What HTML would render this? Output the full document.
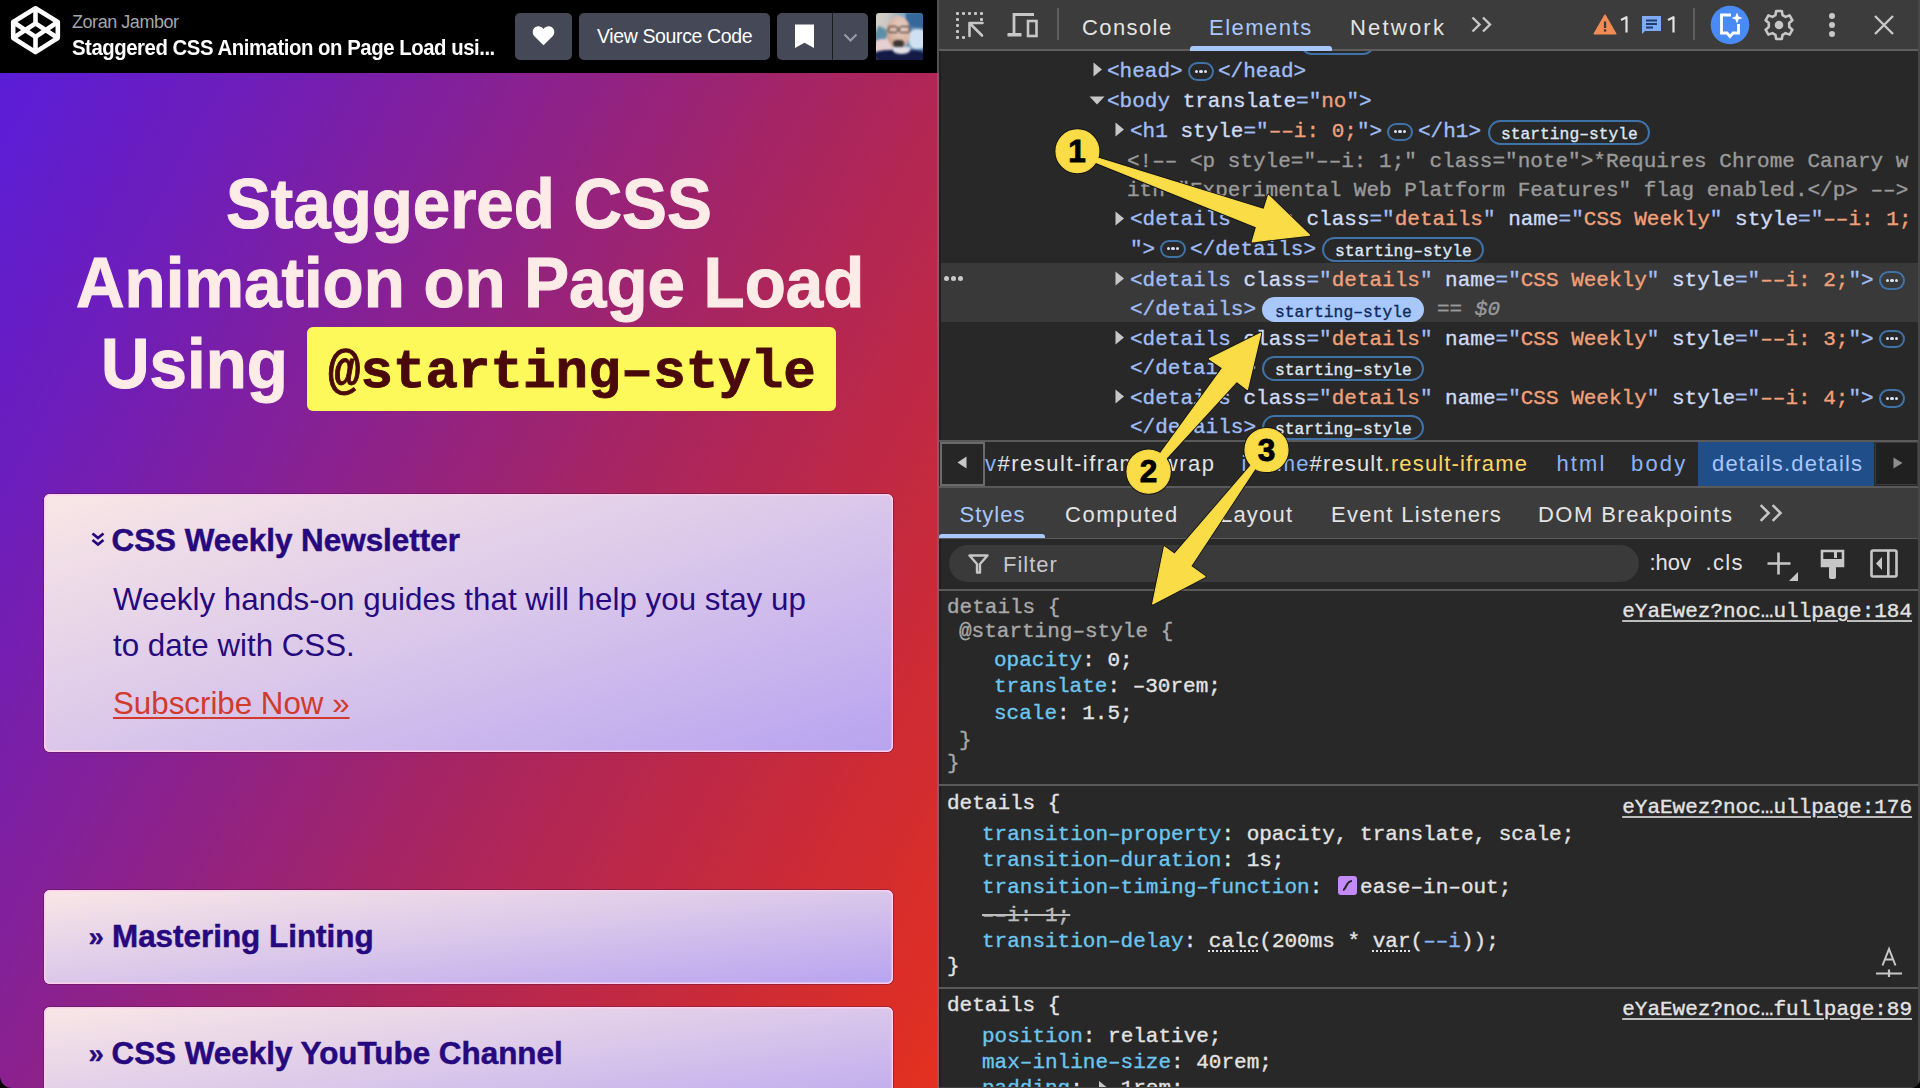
<!DOCTYPE html>
<html><head><meta charset="utf-8"><title>recreation</title>
<style>
html,body{margin:0;padding:0}
body{width:1920px;height:1088px;overflow:hidden;position:relative;background:#000;font-family:"Liberation Sans",sans-serif}
.m{position:absolute;white-space:pre;font-family:"Liberation Mono",monospace;line-height:1;-webkit-text-stroke:0.35px}
.s{position:absolute;white-space:pre;font-family:"Liberation Sans",sans-serif;line-height:1}
.abs{position:absolute}
</style></head><body>

<div class="abs" style="left:0;top:0;width:939px;height:1088px;overflow:hidden;border-bottom-left-radius:12px;background:#000">
<div class="abs" style="left:0;top:0;width:937px;height:73px;background:#000"></div>
<svg class="abs" style="left:0;top:0" width="73" height="73" viewBox="0 0 73 73">
<g fill="none" stroke="#fff" stroke-width="4.6" stroke-linejoin="round">
<polygon points="35.5,8.3 57.8,22 57.8,38 35.5,52.1 13.2,38 13.2,22"/>
<polyline points="13.2,22 35.5,36.8 57.8,22"/>
<polyline points="13.2,38 35.5,23.4 57.8,38"/>
<line x1="35.5" y1="8.3" x2="35.5" y2="23.4"/>
<line x1="35.5" y1="36.8" x2="35.5" y2="52.1"/>
</g></svg>
<div class="s" style="left:72.00px;top:12.51px;font-size:18px;color:#a5a5ab;font-weight:400;letter-spacing:-0.45px">Zoran Jambor</div>
<div class="s" style="left:71.50px;top:36.67px;font-size:22.6px;color:#fff;font-weight:700;letter-spacing:-0.5px;transform:scaleX(0.9);transform-origin:0 0">Staggered CSS Animation on Page Load usi...</div>
<div class="abs" style="left:515px;top:13px;width:57px;height:47px;background:#444857;border-radius:5px"></div>
<svg class="abs" style="left:532px;top:25px" width="23" height="21" viewBox="0 0 23 21"><path d="M11.5 20.2 L2.6 11.6 C-0.2 8.8 0.2 4 3.4 2.1 C6.2 0.4 9.6 1.3 11.5 4 C13.4 1.3 16.8 0.4 19.6 2.1 C22.8 4 23.2 8.8 20.4 11.6 Z" fill="#fff"/></svg>
<div class="abs" style="left:579px;top:13px;width:191px;height:47px;background:#444857;border-radius:5px"></div>
<div class="s" style="left:597.00px;top:26.69px;font-size:19.5px;color:#fff;font-weight:400;letter-spacing:-0.37px">View Source Code</div>
<div class="abs" style="left:777px;top:13px;width:91px;height:47px;background:#444857;border-radius:5px"></div>
<div class="abs" style="left:832px;top:13px;width:1px;height:47px;background:#1b1c22"></div>
<svg class="abs" style="left:795px;top:24px" width="19" height="24" viewBox="0 0 19 24"><path d="M0 0.5 H19 V24 L9.5 18.8 L0 24 Z" fill="#fff"/></svg>
<svg class="abs" style="left:843px;top:33px" width="15" height="10" viewBox="0 0 15 10"><path d="M1.5 1.5 L7.5 7.5 L13.5 1.5" fill="none" stroke="#9a9ba5" stroke-width="2"/></svg>
<div class="abs" style="left:876px;top:13px;width:47px;height:47px;border-radius:3px;overflow:hidden;background:linear-gradient(90deg,#d6cfc6 0%,#c9c8c4 25%,#7fa3c0 62%,#3f6f9c 100%)">
<div style="position:absolute;left:0;top:0;width:47px;height:47px;filter:blur(1.2px)">
<div class="abs" style="left:-4px;top:14px;width:12px;height:26px;background:#5e8fa6;transform:rotate(28deg)"></div>
<div class="abs" style="left:33px;top:16px;width:18px;height:20px;border-radius:40%;background:#cfe0f2"></div>
<div class="abs" style="left:30px;top:0px;width:20px;height:14px;background:#35679a"></div>
<div class="abs" style="left:-2px;top:26px;width:18px;height:16px;border-radius:40%;background:#e6cfd0"></div>
<div class="abs" style="left:11px;top:3px;width:23px;height:31px;border-radius:48% 48% 42% 42%;background:radial-gradient(ellipse at 60% 35%,#e9d0c4 0%,#d8b2a0 60%,#b98870 100%)"></div>
<div class="abs" style="left:11.5px;top:13px;width:10.5px;height:7px;border:1.8px solid #2e2624;border-radius:2px;box-sizing:border-box"></div><div class="abs" style="left:23px;top:13px;width:10.5px;height:7px;border:1.8px solid #2e2624;border-radius:2px;box-sizing:border-box"></div>
<div class="abs" style="left:17px;top:27px;width:11px;height:8px;border-radius:40% 40% 50% 50%;background:#3b3635"></div>
<div class="abs" style="left:-2px;top:37px;width:51px;height:14px;background:#141a48;border-radius:30% 30% 0 0"></div>
<div class="abs" style="left:17px;top:34px;width:17px;height:7px;border-radius:0 0 50% 50%;background:#e2e0e6"></div>
</div>
</div>
<div class="abs" style="left:0;top:73px;width:939px;height:1015px;background:linear-gradient(118deg,#5a1dd8 0%,#721eb4 20%,#a82560 57%,#c82a3a 80%,#e4301f 100%)"></div>
<div class="s" style="left:225.5px;top:167.90px;font-size:71px;font-weight:700;color:#fcebe6;transform:scaleX(0.947);transform-origin:0 0;-webkit-text-stroke:1.1px #fcebe6">Staggered CSS</div>
<div class="s" style="left:75.5px;top:246.90px;font-size:71px;font-weight:700;color:#fcebe6;transform:scaleX(0.947);transform-origin:0 0;-webkit-text-stroke:1.1px #fcebe6">Animation on Page Load</div>
<div class="s" style="left:100.5px;top:327.90px;font-size:71px;font-weight:700;color:#fcebe6;transform:scaleX(0.947);transform-origin:0 0;-webkit-text-stroke:1.1px #fcebe6">Using</div>
<div class="abs" style="left:307px;top:327px;width:529px;height:84px;background:#fdf95a;border-radius:6px"></div>
<div class="m" style="left:328px;top:346.44px;font-size:54.2px;color:#4a0a0c;font-weight:700;-webkit-text-stroke:0.9px #4a0a0c">@starting–style</div>
<div class="abs" style="left:44px;top:494px;width:849px;height:258px;border-radius:6px;background:linear-gradient(to bottom right,#f9e7e6 0%,#dac7ea 50%,#b8a3f0 100%);box-shadow:inset 0 0 0 1.5px rgba(255,208,236,0.95), 0 0 0 1px rgba(80,20,60,0.4)"></div>
<div class="abs" style="left:44px;top:890px;width:849px;height:94px;border-radius:6px;background:linear-gradient(to bottom right,#f9e7e6 0%,#dac7ea 50%,#b8a3f0 100%);box-shadow:inset 0 0 0 1.5px rgba(255,208,236,0.95), 0 0 0 1px rgba(80,20,60,0.4)"></div>
<div class="abs" style="left:44px;top:1007px;width:849px;height:120px;border-radius:6px;background:linear-gradient(to bottom right,#f9e7e6 0%,#dac7ea 50%,#b8a3f0 100%);box-shadow:inset 0 0 0 1.5px rgba(255,208,236,0.95), 0 0 0 1px rgba(80,20,60,0.4)"></div>
<svg class="abs" style="left:91px;top:532px" width="14" height="15" viewBox="0 0 14 15"><path d="M1.5 1.5 L7 6 L12.5 1.5 M1.5 8 L7 12.5 L12.5 8" fill="none" stroke="#26097e" stroke-width="2.8"/></svg>
<div class="s" style="left:111.50px;top:525.12px;font-size:31.4px;color:#26097e;font-weight:700;letter-spacing:0px;-webkit-text-stroke:0.5px #26097e">CSS Weekly Newsletter</div>
<div class="s" style="left:113.00px;top:583.50px;font-size:31.3px;color:#26097e;font-weight:400;letter-spacing:0.02px">Weekly hands-on guides that will help you stay up</div>
<div class="s" style="left:113.00px;top:629.50px;font-size:31.3px;color:#26097e;font-weight:400;">to date with CSS.</div>
<div class="s" style="left:113.00px;top:687.50px;font-size:31.3px;color:#d23a2c;font-weight:400;"><span style="text-decoration:underline;text-decoration-thickness:2px;text-underline-offset:3px">Subscribe Now »</span></div>
<div class="s" style="left:88.50px;top:922.52px;font-size:27.5px;color:#26097e;font-weight:700;-webkit-text-stroke:0.3px #26097e">»</div>
<div class="s" style="left:112.00px;top:921.42px;font-size:31.4px;color:#26097e;font-weight:700;letter-spacing:0px;-webkit-text-stroke:0.5px #26097e">Mastering Linting</div>
<div class="s" style="left:88.50px;top:1039.52px;font-size:27.5px;color:#26097e;font-weight:700;-webkit-text-stroke:0.3px #26097e">»</div>
<div class="s" style="left:111.50px;top:1038.42px;font-size:31.4px;color:#26097e;font-weight:700;letter-spacing:0px;-webkit-text-stroke:0.5px #26097e">CSS Weekly YouTube Channel</div>
</div>
<div class="abs" style="left:939px;top:0;width:981px;height:1088px;background:#282828;overflow:hidden;border-bottom-right-radius:9px">
<div class="abs" style="left:0;top:51px;width:2px;height:1037px;background:#202020"></div>
<div class="abs" style="left:0;top:0;width:981px;height:49px;background:#3c3c3c"></div>
<div class="abs" style="left:0;top:49px;width:981px;height:2px;background:#5e5e5e"></div>
<svg class="abs" style="left:16px;top:11px" width="29" height="28" viewBox="0 0 29 28">
<g fill="#c7c7c7">
<rect x="1" y="1" width="3" height="3" rx="1"/><rect x="7" y="1" width="3" height="3" rx="1"/><rect x="13" y="1" width="3" height="3" rx="1"/><rect x="19" y="1" width="3" height="3" rx="1"/><rect x="25" y="1" width="3" height="3" rx="1"/>
<rect x="1" y="7" width="3" height="3" rx="1"/><rect x="1" y="13" width="3" height="3" rx="1"/><rect x="1" y="19" width="3" height="3" rx="1"/><rect x="1" y="25" width="3" height="3" rx="1"/>
<rect x="7" y="25" width="3" height="3" rx="1"/><rect x="25" y="7" width="3" height="3" rx="1"/>
</g>
<path d="M14.5 12 H27.5 M14.5 12 V25 M15 12.5 L27 24.5" stroke="#c7c7c7" stroke-width="2.6" fill="none" stroke-linecap="round"/>
</svg>
<svg class="abs" style="left:68px;top:12px" width="32" height="26" viewBox="0 0 32 26">
<path d="M7 22.5 V2.5 H27" stroke="#c7c7c7" stroke-width="2.8" fill="none"/>
<rect x="0.5" y="21" width="14" height="3.5" fill="#c7c7c7"/>
<rect x="21" y="9" width="8.5" height="15" fill="none" stroke="#c7c7c7" stroke-width="2.6"/>
</svg>
<div class="abs" style="left:118px;top:8px;width:2px;height:32px;background:#5f5f5f"></div>
<div class="s" style="left:143.00px;top:17.38px;font-size:22px;color:#e3e3e3;font-weight:400;letter-spacing:1.4px">Console</div>
<div class="s" style="left:270.00px;top:17.38px;font-size:22px;color:#a8c7fa;font-weight:400;letter-spacing:1.5px">Elements</div>
<div class="s" style="left:411.00px;top:17.38px;font-size:22px;color:#e3e3e3;font-weight:400;letter-spacing:2.2px">Network</div>
<div class="abs" style="left:251px;top:46px;width:142px;height:5px;background:#a8c7fa;border-radius:3px 3px 0 0"></div>
<svg class="abs" style="left:532px;top:16px" width="22" height="17" viewBox="0 0 22 17"><path d="M1.5 1.5 L8.5 8.5 L1.5 15.5 M12 1.5 L19 8.5 L12 15.5" fill="none" stroke="#c7c7c7" stroke-width="2.4"/></svg>
<svg class="abs" style="left:653.5px;top:13.5px" width="24" height="21" viewBox="0 0 24 21"><path d="M12 1.2 L22.8 19.8 H1.2 Z" fill="#f28b54" stroke="#f28b54" stroke-linejoin="round" stroke-width="1.5"/><rect x="10.9" y="7.5" width="2.3" height="6.5" fill="#3c3c3c"/><rect x="10.9" y="15.3" width="2.3" height="2.3" fill="#3c3c3c"/></svg>
<svg class="abs" style="left:680.5px;top:16px" width="10" height="17" viewBox="0 0 10 17"><path d="M1 4 L6.5 1.2 V16.5" fill="none" stroke="#e3e3e3" stroke-width="2.2" stroke-linejoin="round"/></svg>
<svg class="abs" style="left:702px;top:15px" width="21" height="19" viewBox="0 0 21 19"><path d="M1 1 H20 V16 H4 L1 19 Z" fill="#7cacf8"/><rect x="5" y="4.5" width="11" height="2" fill="#1f3b6a"/><rect x="5" y="8" width="11" height="2" fill="#1f3b6a"/><rect x="5" y="11.5" width="7" height="2" fill="#1f3b6a"/></svg>
<svg class="abs" style="left:727.5px;top:16px" width="10" height="17" viewBox="0 0 10 17"><path d="M1 4 L6.5 1.2 V16.5" fill="none" stroke="#e3e3e3" stroke-width="2.2" stroke-linejoin="round"/></svg>
<div class="abs" style="left:754px;top:8px;width:2px;height:32px;background:#5f5f5f"></div>
<svg class="abs" style="left:771px;top:5px" width="40" height="40" viewBox="0 0 40 40">
<circle cx="20" cy="20" r="19.3" fill="#4a8af4"/>
<path d="M21 10 H11.5 V28 H17 L20 31.5 L23 28 H28.5 V19" fill="none" stroke="#fff" stroke-width="2.8"/>
<path d="M27 7.5 L28.6 11.4 L32.5 13 L28.6 14.6 L27 18.5 L25.4 14.6 L21.5 13 L25.4 11.4 Z" fill="#fff"/>
</svg>
<svg class="abs" style="left:824px;top:9px" width="32" height="32" viewBox="0 0 32 32">
<path d="M13.2 2 H18.8 L19.6 6.2 L22.6 7.9 L26.6 6.4 L29.4 11.3 L26.2 14 V18 L29.4 20.7 L26.6 25.6 L22.6 24.1 L19.6 25.8 L18.8 30 H13.2 L12.4 25.8 L9.4 24.1 L5.4 25.6 L2.6 20.7 L5.8 18 V14 L2.6 11.3 L5.4 6.4 L9.4 7.9 L12.4 6.2 Z" fill="none" stroke="#c7c7c7" stroke-width="2.6" stroke-linejoin="round"/>
<circle cx="16" cy="16" r="4.3" fill="#c7c7c7"/>
</svg>
<div class="abs" style="left:890.3px;top:12.9px;width:6.2px;height:6.2px;border-radius:50%;background:#c7c7c7"></div>
<div class="abs" style="left:890.3px;top:21.7px;width:6.2px;height:6.2px;border-radius:50%;background:#c7c7c7"></div>
<div class="abs" style="left:890.3px;top:30.6px;width:6.2px;height:6.2px;border-radius:50%;background:#c7c7c7"></div>
<svg class="abs" style="left:934px;top:14px" width="22" height="22" viewBox="0 0 22 22"><path d="M2 2 L20 20 M20 2 L2 20" stroke="#c7c7c7" stroke-width="2.4"/></svg>
<div class="abs" style="left:361px;top:51px;width:75px;height:4px;overflow:hidden"><div class="abs" style="left:0;top:-20px;width:75px;height:24px;border:2px solid #3f73a8;border-radius:12px;box-sizing:border-box"></div></div>
<div class="abs" style="left:2px;top:263px;width:979px;height:58.5px;background:#393939"></div>
<div class="abs" style="left:5px;top:276.0px;width:5px;height:5px;border-radius:50%;background:#c9c9c9"></div>
<div class="abs" style="left:12px;top:276.0px;width:5px;height:5px;border-radius:50%;background:#c9c9c9"></div>
<div class="abs" style="left:19px;top:276.0px;width:5px;height:5px;border-radius:50%;background:#c9c9c9"></div>
<svg class="abs" style="left:154px;top:62px" width="10" height="15" viewBox="0 0 10 15"><path d="M0.5 0.5 L9 7.5 L0.5 14.5 Z" fill="#c7c7c7"/></svg>
<div class="m" style="left:168px;top:60.90px;font-size:21px;color:#e3e3e3;"><span style="color:#a0bdf5">&lt;head&gt;</span></div>
<div class="abs" style="left:249px;top:62px;width:26px;height:18.5px;border:2px solid #3f73a8;border-radius:10px;box-sizing:border-box"></div>
<div class="abs" style="left:255.8px;top:69.5px;width:3.4px;height:3.4px;border-radius:50%;background:#d8e2f4"></div>
<div class="abs" style="left:260.40000000000003px;top:69.5px;width:3.4px;height:3.4px;border-radius:50%;background:#d8e2f4"></div>
<div class="abs" style="left:265.0px;top:69.5px;width:3.4px;height:3.4px;border-radius:50%;background:#d8e2f4"></div>
<div class="m" style="left:279px;top:60.90px;font-size:21px;color:#e3e3e3;"><span style="color:#a0bdf5">&lt;/head&gt;</span></div>
<svg class="abs" style="left:150px;top:96px" width="16" height="9" viewBox="0 0 16 9"><path d="M0.5 0.5 H15.5 L8 8.5 Z" fill="#c7c7c7"/></svg>
<div class="m" style="left:168px;top:91.40px;font-size:21px;color:#e3e3e3;"><span style="color:#a0bdf5">&lt;body</span> <span style="color:#cfdbf6">translate</span><span style="color:#a0bdf5">="</span><span style="color:#f1a07a">no</span><span style="color:#a0bdf5">"&gt;</span></div>
<svg class="abs" style="left:176px;top:122px" width="10" height="15" viewBox="0 0 10 15"><path d="M0.5 0.5 L9 7.5 L0.5 14.5 Z" fill="#c7c7c7"/></svg>
<div class="m" style="left:191px;top:121.40px;font-size:21px;color:#e3e3e3;"><span style="color:#a0bdf5">&lt;h1</span> <span style="color:#cfdbf6">style</span><span style="color:#a0bdf5">="</span><span style="color:#f1a07a">––i: 0;</span><span style="color:#a0bdf5">"&gt;</span></div>
<div class="abs" style="left:448px;top:122.5px;width:26px;height:18.5px;border:2px solid #3f73a8;border-radius:10px;box-sizing:border-box"></div>
<div class="abs" style="left:454.8px;top:130.0px;width:3.4px;height:3.4px;border-radius:50%;background:#d8e2f4"></div>
<div class="abs" style="left:459.40000000000003px;top:130.0px;width:3.4px;height:3.4px;border-radius:50%;background:#d8e2f4"></div>
<div class="abs" style="left:464.0px;top:130.0px;width:3.4px;height:3.4px;border-radius:50%;background:#d8e2f4"></div>
<div class="m" style="left:479px;top:121.40px;font-size:21px;color:#e3e3e3;"><span style="color:#a0bdf5">&lt;/h1&gt;</span></div>
<div class="abs" style="left:549px;top:119.5px;width:162px;height:25px;border:2px solid #3f73a8;border-radius:13px;box-sizing:border-box"></div>
<div class="m" style="left:562px;top:126.80px;font-size:16.3px;color:#dfe6f3;">starting–style</div>
<div class="m" style="left:188px;top:150.90px;font-size:21px;color:#e3e3e3;"><span style="color:#9a9a9a">&lt;!–– &lt;p style="––i: 1;" class="note"&gt;*Requires Chrome Canary w</span></div>
<div class="m" style="left:188px;top:179.90px;font-size:21px;color:#e3e3e3;"><span style="color:#9a9a9a">ith "Experimental Web Platform Features" flag enabled.&lt;/p&gt; ––&gt;</span></div>
<svg class="abs" style="left:176px;top:211px" width="10" height="15" viewBox="0 0 10 15"><path d="M0.5 0.5 L9 7.5 L0.5 14.5 Z" fill="#c7c7c7"/></svg>
<div class="m" style="left:191px;top:209.30px;font-size:21px;color:#e3e3e3;"><span style="color:#a0bdf5">&lt;details</span> <span style="color:#cfdbf6">open</span> <span style="color:#cfdbf6">class</span><span style="color:#a0bdf5">="</span><span style="color:#f1a07a">details</span><span style="color:#a0bdf5">"</span> <span style="color:#cfdbf6">name</span><span style="color:#a0bdf5">="</span><span style="color:#f1a07a">CSS Weekly</span><span style="color:#a0bdf5">"</span> <span style="color:#cfdbf6">style</span><span style="color:#a0bdf5">="</span><span style="color:#f1a07a">––i: 1;</span></div>
<div class="m" style="left:191px;top:238.50px;font-size:21px;color:#e3e3e3;"><span style="color:#a0bdf5">"&gt;</span></div>
<div class="abs" style="left:221px;top:239.6px;width:26px;height:18.5px;border:2px solid #3f73a8;border-radius:10px;box-sizing:border-box"></div>
<div class="abs" style="left:227.8px;top:247.1px;width:3.4px;height:3.4px;border-radius:50%;background:#d8e2f4"></div>
<div class="abs" style="left:232.4px;top:247.1px;width:3.4px;height:3.4px;border-radius:50%;background:#d8e2f4"></div>
<div class="abs" style="left:237.0px;top:247.1px;width:3.4px;height:3.4px;border-radius:50%;background:#d8e2f4"></div>
<div class="m" style="left:251px;top:238.50px;font-size:21px;color:#e3e3e3;"><span style="color:#a0bdf5">&lt;/details&gt;</span></div>
<div class="abs" style="left:383px;top:236.6px;width:162px;height:25px;border:2px solid #3f73a8;border-radius:13px;box-sizing:border-box"></div>
<div class="m" style="left:396px;top:243.90px;font-size:16.3px;color:#dfe6f3;">starting–style</div>
<svg class="abs" style="left:176px;top:271px" width="10" height="15" viewBox="0 0 10 15"><path d="M0.5 0.5 L9 7.5 L0.5 14.5 Z" fill="#c7c7c7"/></svg>
<div class="m" style="left:191px;top:270.15px;font-size:21px;color:#e3e3e3;"><span style="color:#a0bdf5">&lt;details</span> <span style="color:#cfdbf6">class</span><span style="color:#a0bdf5">="</span><span style="color:#f1a07a">details</span><span style="color:#a0bdf5">"</span> <span style="color:#cfdbf6">name</span><span style="color:#a0bdf5">="</span><span style="color:#f1a07a">CSS Weekly</span><span style="color:#a0bdf5">"</span> <span style="color:#cfdbf6">style</span><span style="color:#a0bdf5">="</span><span style="color:#f1a07a">––i: 2;</span><span style="color:#a0bdf5">"&gt;</span></div>
<div class="abs" style="left:940px;top:271.25px;width:26px;height:18.5px;border:2px solid #3f73a8;border-radius:10px;box-sizing:border-box"></div>
<div class="abs" style="left:946.8px;top:278.75px;width:3.4px;height:3.4px;border-radius:50%;background:#d8e2f4"></div>
<div class="abs" style="left:951.4px;top:278.75px;width:3.4px;height:3.4px;border-radius:50%;background:#d8e2f4"></div>
<div class="abs" style="left:956.0px;top:278.75px;width:3.4px;height:3.4px;border-radius:50%;background:#d8e2f4"></div>
<div class="m" style="left:191px;top:299.30px;font-size:21px;color:#e3e3e3;"><span style="color:#a0bdf5">&lt;/details&gt;</span></div>
<div class="abs" style="left:323px;top:297.4px;width:162px;height:25px;background:#a8c7fa;border-radius:13px"></div>
<div class="m" style="left:336px;top:304.70px;font-size:16.3px;color:#0d2a5a;">starting–style</div>
<div class="m" style="left:498px;top:299.30px;font-size:21px;color:#e3e3e3;"><span style="color:#9a9a9a">== </span><span style="color:#9a9a9a;font-style:italic">$0</span></div>
<svg class="abs" style="left:176px;top:330px" width="10" height="15" viewBox="0 0 10 15"><path d="M0.5 0.5 L9 7.5 L0.5 14.5 Z" fill="#c7c7c7"/></svg>
<div class="m" style="left:191px;top:328.50px;font-size:21px;color:#e3e3e3;"><span style="color:#a0bdf5">&lt;details</span> <span style="color:#cfdbf6">class</span><span style="color:#a0bdf5">="</span><span style="color:#f1a07a">details</span><span style="color:#a0bdf5">"</span> <span style="color:#cfdbf6">name</span><span style="color:#a0bdf5">="</span><span style="color:#f1a07a">CSS Weekly</span><span style="color:#a0bdf5">"</span> <span style="color:#cfdbf6">style</span><span style="color:#a0bdf5">="</span><span style="color:#f1a07a">––i: 3;</span><span style="color:#a0bdf5">"&gt;</span></div>
<div class="abs" style="left:940px;top:329.6px;width:26px;height:18.5px;border:2px solid #3f73a8;border-radius:10px;box-sizing:border-box"></div>
<div class="abs" style="left:946.8px;top:337.1px;width:3.4px;height:3.4px;border-radius:50%;background:#d8e2f4"></div>
<div class="abs" style="left:951.4px;top:337.1px;width:3.4px;height:3.4px;border-radius:50%;background:#d8e2f4"></div>
<div class="abs" style="left:956.0px;top:337.1px;width:3.4px;height:3.4px;border-radius:50%;background:#d8e2f4"></div>
<div class="m" style="left:191px;top:357.65px;font-size:21px;color:#e3e3e3;"><span style="color:#a0bdf5">&lt;/details&gt;</span></div>
<div class="abs" style="left:323px;top:355.75px;width:162px;height:25px;border:2px solid #3f73a8;border-radius:13px;box-sizing:border-box"></div>
<div class="m" style="left:336px;top:363.05px;font-size:16.3px;color:#dfe6f3;">starting–style</div>
<svg class="abs" style="left:176px;top:389px" width="10" height="15" viewBox="0 0 10 15"><path d="M0.5 0.5 L9 7.5 L0.5 14.5 Z" fill="#c7c7c7"/></svg>
<div class="m" style="left:191px;top:387.90px;font-size:21px;color:#e3e3e3;"><span style="color:#a0bdf5">&lt;details</span> <span style="color:#cfdbf6">class</span><span style="color:#a0bdf5">="</span><span style="color:#f1a07a">details</span><span style="color:#a0bdf5">"</span> <span style="color:#cfdbf6">name</span><span style="color:#a0bdf5">="</span><span style="color:#f1a07a">CSS Weekly</span><span style="color:#a0bdf5">"</span> <span style="color:#cfdbf6">style</span><span style="color:#a0bdf5">="</span><span style="color:#f1a07a">––i: 4;</span><span style="color:#a0bdf5">"&gt;</span></div>
<div class="abs" style="left:940px;top:389px;width:26px;height:18.5px;border:2px solid #3f73a8;border-radius:10px;box-sizing:border-box"></div>
<div class="abs" style="left:946.8px;top:396.5px;width:3.4px;height:3.4px;border-radius:50%;background:#d8e2f4"></div>
<div class="abs" style="left:951.4px;top:396.5px;width:3.4px;height:3.4px;border-radius:50%;background:#d8e2f4"></div>
<div class="abs" style="left:956.0px;top:396.5px;width:3.4px;height:3.4px;border-radius:50%;background:#d8e2f4"></div>
<div class="m" style="left:191px;top:416.90px;font-size:21px;color:#e3e3e3;"><span style="color:#a0bdf5">&lt;/details&gt;</span></div>
<div class="abs" style="left:323px;top:415px;width:162px;height:25px;border:2px solid #3f73a8;border-radius:13px;box-sizing:border-box"></div>
<div class="m" style="left:336px;top:422.30px;font-size:16.3px;color:#dfe6f3;">starting–style</div>
<div class="abs" style="left:0;top:440px;width:981px;height:1.5px;background:#5a5a5a"></div>
<div class="abs" style="left:0;top:441.5px;width:981px;height:44.5px;background:#282828"></div>
<div class="abs" style="left:0.5px;top:442px;width:45.5px;height:44px;border:2px solid #6a6a6a;box-sizing:border-box;background:#262626"></div>
<svg class="abs" style="left:18px;top:456px" width="10" height="13" viewBox="0 0 10 13"><path d="M9.5 0.5 L0.5 6.5 L9.5 12.5 Z" fill="#c7c7c7"/></svg>
<div class="s" style="left:46.00px;top:452.78px;font-size:22px;color:#e3e3e3;font-weight:400;letter-spacing:1.5px"><span style="color:#8ab4f8">v</span><span style="color:#e3e3e3">#result-iframe-wrap</span></div>
<div class="s" style="left:302.50px;top:452.78px;font-size:22px;color:#e3e3e3;font-weight:400;letter-spacing:1.15px"><span style="color:#8ab4f8">iframe</span><span style="color:#e3e3e3">#result</span><span style="color:#fdd663">.result-iframe</span></div>
<div class="s" style="left:617.50px;top:452.78px;font-size:22px;color:#8ab4f8;font-weight:400;letter-spacing:2.1px"><span style="color:#8ab4f8">html</span></div>
<div class="s" style="left:692.00px;top:452.78px;font-size:22px;color:#8ab4f8;font-weight:400;letter-spacing:2.2px"><span style="color:#8ab4f8">body</span></div>
<div class="abs" style="left:759px;top:442px;width:176px;height:44px;background:#1f4e89"></div>
<div class="s" style="left:773.00px;top:452.78px;font-size:22px;color:#a8c7fa;font-weight:400;letter-spacing:1.2px">details.details</div>
<div class="abs" style="left:936px;top:442px;width:43px;height:43px;background:#202020;border:1px solid #3a3a3a;box-sizing:border-box"></div>
<svg class="abs" style="left:954px;top:457px" width="10" height="12" viewBox="0 0 10 12"><path d="M0.5 0.5 L9.5 6 L0.5 11.5 Z" fill="#8e8e8e"/></svg>
<div class="abs" style="left:0;top:486px;width:981px;height:1.5px;background:#5a5a5a"></div>
<div class="abs" style="left:0;top:487.5px;width:981px;height:50px;background:#3c3c3c"></div>
<div class="s" style="left:20.50px;top:503.58px;font-size:22px;color:#a8c7fa;font-weight:400;letter-spacing:1px">Styles</div>
<div class="s" style="left:126.00px;top:503.58px;font-size:22px;color:#e3e3e3;font-weight:400;letter-spacing:1.55px">Computed</div>
<div class="s" style="left:281.00px;top:503.58px;font-size:22px;color:#e3e3e3;font-weight:400;letter-spacing:1.2px">Layout</div>
<div class="s" style="left:392.00px;top:503.58px;font-size:22px;color:#e3e3e3;font-weight:400;letter-spacing:1.3px">Event Listeners</div>
<div class="s" style="left:599.00px;top:503.58px;font-size:22px;color:#e3e3e3;font-weight:400;letter-spacing:1.45px">DOM Breakpoints</div>
<svg class="abs" style="left:820px;top:503px" width="25" height="20" viewBox="0 0 22 17"><path d="M1.5 1.5 L8.5 8.5 L1.5 15.5 M12 1.5 L19 8.5 L12 15.5" fill="none" stroke="#c7c7c7" stroke-width="2.2"/></svg>
<div class="abs" style="left:0px;top:534px;width:106px;height:4.5px;background:#a8c7fa;border-radius:3px 3px 0 0"></div>
<div class="abs" style="left:0;top:537.5px;width:981px;height:1.5px;background:#5a5a5a"></div>
<div class="abs" style="left:10px;top:545px;width:690px;height:37px;background:#3a3a3a;border-radius:19px"></div>
<svg class="abs" style="left:29px;top:554px" width="21" height="20" viewBox="0 0 21 20"><path d="M1.5 1.5 H19.5 L12 10 V18.5 H9 V10 Z" fill="none" stroke="#c7c7c7" stroke-width="2.4" stroke-linejoin="round"/></svg>
<div class="s" style="left:64.00px;top:554.38px;font-size:22px;color:#c7c7c7;font-weight:400;letter-spacing:1px">Filter</div>
<div class="s" style="left:710.50px;top:552.18px;font-size:22px;color:#e3e3e3;font-weight:400;letter-spacing:0px">:hov</div>
<div class="s" style="left:766.50px;top:552.18px;font-size:22px;color:#e3e3e3;font-weight:400;letter-spacing:1.3px">.cls</div>
<svg class="abs" style="left:827px;top:551px" width="34" height="31" viewBox="0 0 34 31"><path d="M12.5 1.5 V23.5 M1.5 12.5 H24.5" stroke="#c7c7c7" stroke-width="2.6"/><path d="M32 21 V30 H23 Z" fill="#c7c7c7"/></svg>
<svg class="abs" style="left:881px;top:549px" width="26" height="31" viewBox="0 0 26 31">
<path d="M2 2 H23 V17 H2 Z" fill="none" stroke="#c7c7c7" stroke-width="2.6"/>
<rect x="2" y="10" width="21" height="7" fill="#c7c7c7"/>
<rect x="14" y="2" width="3" height="7" fill="#c7c7c7"/>
<rect x="9" y="17" width="7" height="13" rx="2" fill="#c7c7c7"/>
</svg>
<svg class="abs" style="left:931px;top:549px" width="28" height="29" viewBox="0 0 28 29">
<rect x="1.5" y="1.5" width="25" height="26" rx="1.5" fill="none" stroke="#c7c7c7" stroke-width="2.6"/>
<rect x="17" y="1.5" width="2.6" height="26" fill="#c7c7c7"/>
<path d="M12 8 L6 14.5 L12 21 Z" fill="#c7c7c7"/>
</svg>
<div class="abs" style="left:0;top:589px;width:981px;height:1.5px;background:#5a5a5a"></div>
<div class="m" style="left:8px;top:596.70px;font-size:21px;color:#a9a9a9;">details {</div>
<div class="m" style="left:683.2px;top:601.40px;font-size:21px;color:#e3e3e3;"><span style="text-decoration:underline;text-underline-offset:3px;text-decoration-color:#bdbdbd">eYaEwez?noc…ullpage:184</span></div>
<div class="m" style="left:20px;top:620.90px;font-size:21px;color:#a9a9a9;">@starting–style {</div>
<div class="m" style="left:55px;top:649.60px;font-size:21px;color:#e3e3e3;"><span style="color:#6cc6ee">opacity</span>: 0;</div>
<div class="m" style="left:55px;top:676.10px;font-size:21px;color:#e3e3e3;"><span style="color:#6cc6ee">translate</span>: –30rem;</div>
<div class="m" style="left:55px;top:702.60px;font-size:21px;color:#e3e3e3;"><span style="color:#6cc6ee">scale</span>: 1.5;</div>
<div class="m" style="left:20px;top:729.90px;font-size:21px;color:#a9a9a9;">}</div>
<div class="m" style="left:8px;top:753.30px;font-size:21px;color:#a9a9a9;">}</div>
<div class="abs" style="left:0;top:784px;width:981px;height:1.5px;background:#5a5a5a"></div>
<div class="m" style="left:8px;top:793.40px;font-size:21px;color:#e3e3e3;">details {</div>
<div class="m" style="left:683.2px;top:797.40px;font-size:21px;color:#e3e3e3;"><span style="text-decoration:underline;text-underline-offset:3px;text-decoration-color:#bdbdbd">eYaEwez?noc…ullpage:176</span></div>
<div class="m" style="left:43px;top:824.10px;font-size:21px;color:#e3e3e3;"><span style="color:#6cc6ee">transition–property</span>: opacity, translate, scale;</div>
<div class="m" style="left:43px;top:850.40px;font-size:21px;color:#e3e3e3;"><span style="color:#6cc6ee">transition–duration</span>: 1s;</div>
<div class="m" style="left:43px;top:876.70px;font-size:21px;color:#e3e3e3;"><span style="color:#6cc6ee">transition–timing–function</span>:   ease–in–out;</div>
<svg class="abs" style="left:399px;top:876px" width="19" height="19" viewBox="0 0 19 19"><rect x="0" y="0" width="19" height="19" rx="3" fill="#c58af9"/><path d="M5 14 C8 14 8 5 14 5" stroke="#282828" stroke-width="2.2" fill="none"/></svg>
<div class="m" style="left:43px;top:904.50px;font-size:21px;color:#bdbdbd;"><span style="text-decoration:line-through;text-decoration-thickness:2px">––i: 1;</span></div>
<div class="m" style="left:43px;top:930.80px;font-size:21px;color:#e3e3e3;"><span style="color:#6cc6ee">transition–delay</span>: <span style="text-decoration:underline dotted;text-underline-offset:4px">calc</span>(200ms * <span style="text-decoration:underline dotted;text-underline-offset:4px">var</span>(<span style="color:#8ab4f8">––i</span>));</div>
<div class="m" style="left:8px;top:955.70px;font-size:21px;color:#e3e3e3;">}</div>
<svg class="abs" style="left:936px;top:946px" width="28" height="32" viewBox="0 0 28 32"><path d="M7.5 19.5 L14 3 L20.5 19.5 M10 13.5 H18" stroke="#c7c7c7" stroke-width="2" fill="none"/><path d="M1 27.5 H27 M14 23.5 V31" stroke="#c7c7c7" stroke-width="2.2"/></svg>
<div class="abs" style="left:0;top:987px;width:981px;height:1.5px;background:#5a5a5a"></div>
<div class="m" style="left:8px;top:995.10px;font-size:21px;color:#e3e3e3;">details {</div>
<div class="m" style="left:683.2px;top:998.90px;font-size:21px;color:#e3e3e3;"><span style="text-decoration:underline;text-underline-offset:3px;text-decoration-color:#bdbdbd">eYaEwez?noc…fullpage:89</span></div>
<div class="m" style="left:43px;top:1025.90px;font-size:21px;color:#e3e3e3;"><span style="color:#6cc6ee">position</span>: relative;</div>
<div class="m" style="left:43px;top:1052.10px;font-size:21px;color:#e3e3e3;"><span style="color:#6cc6ee">max–inline–size</span>: 40rem;</div>
<div class="m" style="left:43px;top:1078.40px;font-size:21px;color:#e3e3e3;"><span style="color:#6cc6ee">padding</span>:   1rem;</div>
<svg class="abs" style="left:159px;top:1080px" width="10" height="14" viewBox="0 0 10 14"><path d="M1 1 L8.5 7 L1 13 Z" fill="#c7c7c7"/></svg>
<div class="abs" style="left:979px;top:0;width:2px;height:1088px;background:#474747"></div>
<div class="abs" style="left:0;top:1086.5px;width:983px;height:1.5px;background:#404040"></div>
</div>
<svg class="abs" style="left:0;top:0" width="1920" height="1088" viewBox="0 0 1920 1088">
<g stroke="#141414" stroke-width="3" stroke-linejoin="round" fill="#f9dc46">
<polygon points="1085.0,152.5 1098.5,158.3 1264.0,209.6 1268.4,195.4 1309.6,235.1 1252.2,241.8 1256.6,227.0 1095.5,162.3 1082.0,158.0"/>
<polygon points="1150.0,470.0 1161.3,452.4 1222.6,368.0 1209.3,358.9 1260.7,333.2 1247.4,389.5 1236.7,381.3 1167.0,457.4 1152.0,476.0"/>
<polygon points="1266.0,452.0 1255.3,468.2 1190.7,566.2 1205.0,576.6 1152.7,603.9 1164.4,546.9 1174.5,554.3 1248.8,468.2 1258.0,457.0"/>
<circle cx="1077.4" cy="151.2" r="21.4"/>
<circle cx="1148.6" cy="471.6" r="21.6"/>
<circle cx="1266.5" cy="450" r="21.5"/>
</g>
<g fill="#f9dc46" stroke="#f9dc46" stroke-width="1.2" stroke-linejoin="round">
<polygon points="1085.0,152.5 1098.5,158.3 1264.0,209.6 1268.4,195.4 1309.6,235.1 1252.2,241.8 1256.6,227.0 1095.5,162.3 1082.0,158.0"/>
<polygon points="1150.0,470.0 1161.3,452.4 1222.6,368.0 1209.3,358.9 1260.7,333.2 1247.4,389.5 1236.7,381.3 1167.0,457.4 1152.0,476.0"/>
<polygon points="1266.0,452.0 1255.3,468.2 1190.7,566.2 1205.0,576.6 1152.7,603.9 1164.4,546.9 1174.5,554.3 1248.8,468.2 1258.0,457.0"/>
<circle cx="1077.4" cy="151.2" r="21.4"/>
<circle cx="1148.6" cy="471.6" r="21.6"/>
<circle cx="1266.5" cy="450" r="21.5"/>
</g>
<g font-family="Liberation Sans" font-weight="700" font-size="31.5" fill="#000" stroke="#000" stroke-width="0.9" text-anchor="middle">
<text x="1077" y="161.5">1</text>
<text x="1148.5" y="482">2</text>
<text x="1266.5" y="460.5">3</text>
</g>
</svg>
<div class="abs" style="left:937px;top:0;width:2px;height:1088px;background:rgba(110,110,110,0.75)"></div>
</body></html>
